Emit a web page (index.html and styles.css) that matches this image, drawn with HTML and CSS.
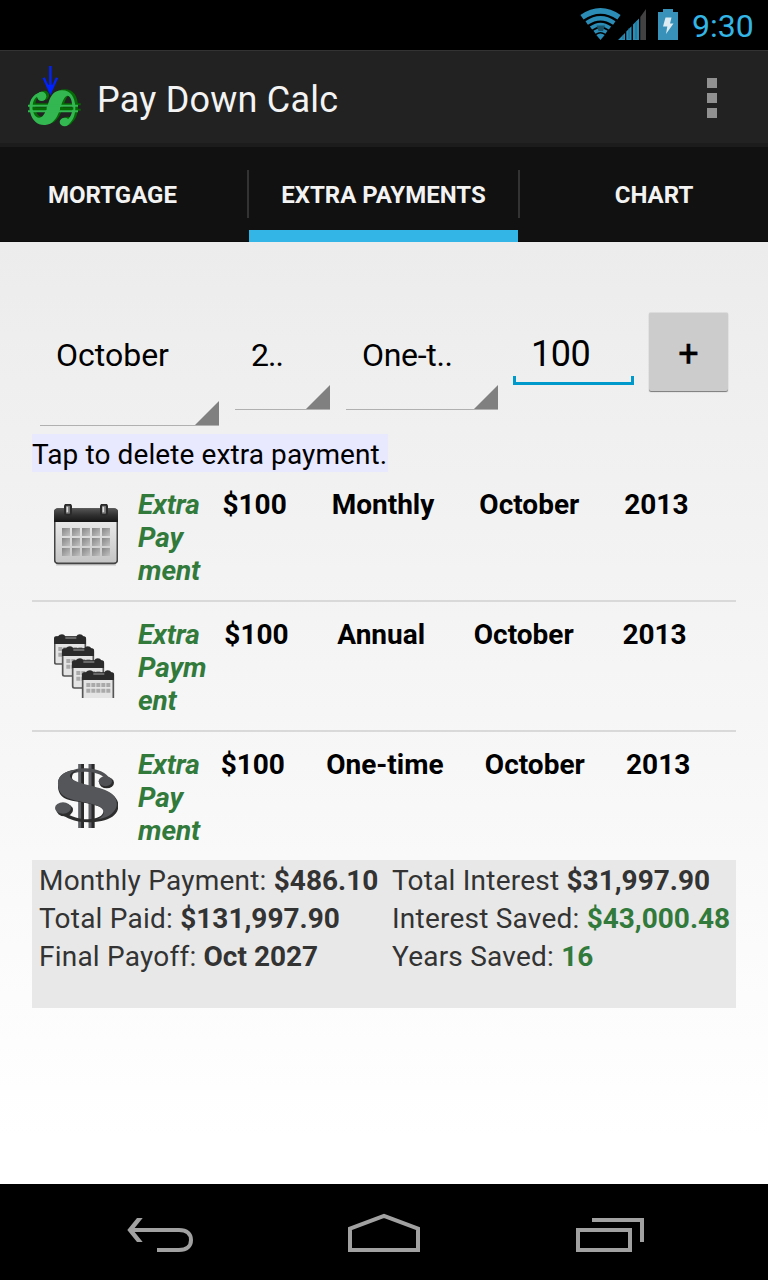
FILE: index.html
```html
<!DOCTYPE html>
<html lang="en">
<head>
<meta charset="utf-8">
<title>Pay Down Calc</title>
<link rel="stylesheet" href="styles.css">
</head>
<body>
<div class="screen">
  <header class="status">
    <svg class="status-icons" width="104" height="34" viewBox="0 0 104 34">
      <g fill="none" stroke="#2b8db6">
        <path d="M2 10.300 Q20.500 -2.500 39 10.300" stroke-width="5.600"/>
        <path d="M6.700 16 Q20.500 6.500 34.300 16" stroke-width="4.200"/>
        <path d="M11 21 Q20.500 14.200 30 21" stroke-width="3.800"/>
        <path d="M14.500 25.300 Q20.500 21 26.500 25.300" stroke-width="3.600"/>
      </g>
      <path d="M16.300 28 Q20.500 25 24.700 28 L20.500 33Z" fill="#2b8db6"/>
      <path d="M16.500 18.500 H25 L23 24 H18.500Z" fill="#1c5268"/>
      <path d="M38 33 L45 26 V33Z M46.300 24.600 L51.500 19.300 V33 H46.300Z M53 17.500 L59 11.500 V33 H53Z" fill="#2b8db6"/>
      <path d="M60.300 10 L66 2 V33 H60.300Z" fill="#424242"/>
      <path d="M43 28v4M49 21v11M56 15v17" stroke="#17617f" stroke-width=".8"/>
      <path d="M78 5 H83 V2 H93 V5 H98 V33 H78Z" fill="#3891b9"/>
      <path d="M85.500 10.500 H91.500 L90 16.500 H93.500 L86 27 L87.300 19.500 H83Z" fill="#dcebf2"/>
    </svg>
    <span class="clock">9:30</span>
  </header>

  <div class="action-bar">
    <svg class="logo" width="70" height="75" viewBox="0 0 210 225">
      <defs>
        <g id="dollar">
          <path d="M62 97 C36 102 22 130 31 159 C37 183 54 197 76 195 C97 193 109 177 117 156 C124 137 128 113 141 107 C150 106 156 119 157 140 C158 159 151 174 138 182 L146 192 C160 182 166 164 166 143 C166 111 152 91 126 91 C102 91 92 107 85 129 C78 152 71 174 57 173 C45 172 38 158 38 140 C38 122 46 109 62 105Z"/>
          <ellipse cx="65" cy="109" rx="14" ry="14"/>
          <ellipse cx="134" cy="186" rx="15" ry="13"/>
        </g>
      </defs>
      <use href="#dollar" x="8" y="-3" fill="#056b05"/>
      <path d="M32 133H182M32 149H182" stroke="#056b05" stroke-width="6"/>
      <use href="#dollar" fill="#33b751"/>
      <path d="M38 145.500H160" stroke="#056b05" stroke-width="8"/>
      <path d="M80 145.500H120" stroke="#33b751" stroke-width="9"/>
      <path d="M24 137.500H174M24 153.500H174" stroke="#33b751" stroke-width="6"/>
      <path d="M91 18V91M71 53L91 97L111 53" fill="none" stroke="#0022ff" stroke-width="7"/>
      <path d="M83 74L91 104L99 74Z" fill="#0022ff"/>
    </svg>
    <h1 class="title">Pay Down Calc</h1>
    <div class="overflow"><i></i><i></i><i></i></div>
  </div>

  <nav class="tabs">
    <div class="tab tab-first"><span>MORTGAGE</span></div>
    <div class="tab tab-active"><span>EXTRA PAYMENTS</span></div>
    <div class="tab tab-last"><span>CHART</span></div>
  </nav>

  <main class="content">
    <div class="form">
      <div class="spinner month"><span>October</span></div>
      <div class="spinner year"><span>2..</span></div>
      <div class="spinner kind"><span>One-t..</span></div>
      <div class="field"><span>100</span></div>
      <div class="add">+</div>
    </div>
    <div class="hint"><span>Tap to delete extra payment.</span></div>

    <div class="row">
      <svg class="icon" width="64" height="64" viewBox="42 42 192 192">
        <defs>
          <linearGradient id="paper" x2="0" y2="1"><stop offset="0" stop-color="#f4f4f4"/><stop offset="1" stop-color="#c4c4c4"/></linearGradient>
          <linearGradient id="top" x2="0" y2="1"><stop offset="0" stop-color="#555"/><stop offset=".5" stop-color="#303030"/><stop offset="1" stop-color="#161616"/></linearGradient>
          <linearGradient id="day" x2="1" y2="1"><stop offset="0" stop-color="#858585"/><stop offset="1" stop-color="#c2c2c2"/></linearGradient>
        </defs>
        <path d="M48 224H228" stroke="#bbb" stroke-width="6" opacity=".6"/>
        <rect x="44" y="57" width="188" height="163" rx="10" fill="url(#paper)" stroke="#444" stroke-width="5"/>
        <path d="M42 96V66Q42 55 53 55H223Q234 55 234 66V96Z" fill="url(#top)"/>
        <g fill="url(#day)">
          <path d="M66 114h24v24h-24z"/><path d="M96 114h24v24h-24z"/><path d="M126 114h24v24h-24z"/><path d="M156 114h24v24h-24z"/><path d="M186 114h24v24h-24z"/>
          <path d="M66 144h24v24h-24z"/><path d="M96 144h24v24h-24z"/><path d="M126 144h24v24h-24z"/><path d="M156 144h24v24h-24z"/><path d="M186 144h24v24h-24z"/>
          <path d="M66 174h24v24h-24z"/><path d="M96 174h24v24h-24z"/><path d="M126 174h24v24h-24z"/><path d="M156 174h24v24h-24z"/><path d="M186 174h24v24h-24z"/>
        </g>
        <g fill="#777" stroke="#2a2a2a" stroke-width="6"><rect x="75" y="44" width="18" height="30" rx="5"/><rect x="183" y="44" width="18" height="30" rx="5"/></g>
        <path d="M82 50v17M190 50v17" stroke="#ddd" stroke-width="5"/>
      </svg>
      <div class="label">Extra<br>Pay<br>ment</div>
      <div class="cells"><span>$100</span><span>Monthly</span><span>October</span><span>2013</span></div>
    </div>

    <div class="row">
      <svg class="icon soft" width="64" height="64" viewBox="42 42 192 192">
        <defs>
          <g id="mini">
            <rect x="2" y="8" width="92" height="80" rx="5" fill="#e4e4e4" stroke="#555" stroke-width="5"/>
            <path d="M0 28V12Q0 5 7 5H12Q16 -1 24 -1Q31 -1 34 5H67Q70 -1 77 -1Q85 -1 88 5Q96 5 96 12V28Z" fill="#2a2a2a"/>
            <path d="M34 10H67" stroke="#888" stroke-width="4"/>
            <path d="M13 43H85M13 60H85" stroke="#aaa" stroke-width="12" stroke-dasharray="12 3"/>
          </g>
        </defs>
        <use href="#mini" x="42" y="44"/><use href="#mini" x="66" y="80"/><use href="#mini" x="96" y="116"/><use href="#mini" x="126" y="152"/>
      </svg>
      <div class="label">Extra<br>Paym<br>ent</div>
      <div class="cells"><span>$100</span><span>Annual</span><span>October</span><span>2013</span></div>
    </div>

    <div class="row row-last">
      <svg class="icon soft" width="64" height="64" viewBox="42 42 192 192">
        <path d="M125 42V234M157 42V234" stroke="#292929" stroke-width="14"/>
        <path d="M119 42V234M150 42V234" stroke="#606164" stroke-width="9"/>
        <path d="M70 84C85 67 108 59 137 60C172 61 196 71 209 94" fill="none" stroke="#505154" stroke-width="10"/>
        <path d="M54 104C52 75 79 60 114 60C101 66 93 76 97 87C108 110 190 111 219 135C243 156 239 185 217 200C187 220 122 221 92 208C71 199 58 192 47 178L60 174C80 195 109 208 144 208C174 207 193 196 190 181C182 158 107 161 74 145C60 137 53 123 54 104Z" fill="#2d2d2e"/>
        <path d="M54 98C54 76 79 59 111 60C92 67 85 76 93 84C110 104 188 108 216 132C231 146 235 165 225 179C214 196 197 204 174 207C192 198 195 188 188 178C174 157 101 158 72 138C59 130 53 114 54 98Z" fill="#555659"/>
        <ellipse cx="200" cy="98" rx="22" ry="17" fill="#2b2b2c"/>
        <ellipse cx="196" cy="94" rx="20" ry="15" fill="#505154"/>
        <ellipse cx="74" cy="180" rx="25" ry="19" fill="#2e2e2f"/>
        <ellipse cx="69" cy="174" rx="24" ry="17" fill="#555659"/>
      </svg>
      <div class="label">Extra<br>Pay<br>ment</div>
      <div class="cells"><span>$100</span><span>One-time</span><span>October</span><span>2013</span></div>
    </div>

    <div class="summary">
      <div class="col-a">
        <div>Monthly Payment: <b>$486.10</b></div>
        <div>Total Paid: <b>$131,997.90</b></div>
        <div>Final Payoff: <b>Oct 2027</b></div>
      </div>
      <div class="col-b">
        <div>Total Interest <b>$31,997.90</b></div>
        <div>Interest Saved: <b class="good">$43,000.48</b></div>
        <div>Years Saved: <b class="good">16</b></div>
      </div>
    </div>
  </main>

  <footer class="navbar">
    <svg width="768" height="96" viewBox="0 0 768 96" fill="none" stroke="#a1a1a1" stroke-width="4">
      <path d="M132 46H179C187 46 191 50 191 56C191 62 187 66 179 66H157"/>
      <path d="M137 34H142.700L133 46L142.700 58H137L127.300 46Z" fill="#a1a1a1" stroke="none"/>
      <path d="M350 66V44.700L384 32L418 44.700V66Z"/>
      <path d="M578 46H630V66H578ZM592 36H642V58"/>
    </svg>
  </footer>
</div>
</body>
</html>
```

FILE: styles.css
```css
* { box-sizing: border-box; }
body { margin: 0; font-family: Roboto, sans-serif; color: #000; }
.screen { width: 768px; height: 1280px; display: flex; flex-direction: column; overflow: hidden; background: #000; }

.status { height: 50px; display: flex; align-items: flex-start; padding: 7px 14px 0 0; justify-content: flex-end; }
.clock { width: 62px; margin-left: 8px; font-size: 32px; line-height: 38px; color: #33b5e5; white-space: nowrap; }

.action-bar { height: 97px; display: flex; background: #222; border-top: 1px solid #333; border-bottom: 4px solid #1c1c1c; padding-left: 20px; }
.logo { margin-top: 9px; }
.title { margin: 28px 0 0 7px; font-size: 36px; line-height: 42px; font-weight: 400; letter-spacing: .22px; color: #f3f3f3; }
.overflow { margin: 27px 51px 0 auto; display: flex; flex-direction: column; gap: 5px; }
.overflow i { width: 10px; height: 10px; background: #919191; }

.tabs { height: 95px; display: flex; background: #111; border-bottom: 1px solid #0c0c0c; color: #f3f3f3; font-size: 24px; font-weight: 700; line-height: 28px; }
.tab { height: 95px; display: flex; justify-content: center; padding-top: 34px; }
.tab-first { width: 249px; padding-right: 24px; background: linear-gradient(#333, #333) 247px 23px / 2px 48px no-repeat; }
.tab-active { width: 269px; border-bottom: 12px solid #33b5e5; }
.tab-last { width: 250px; padding-left: 22px; background: linear-gradient(#333, #333) 0 23px / 2px 48px no-repeat; }

.content { height: 942px; padding: 0 32px; background: linear-gradient(#ececec, #fff 95%); }
.form { height: 192px; display: flex; align-items: flex-start; padding: 70px 8px 0; }
.spinner { font-size: 32px; line-height: 38px; padding: 24px 0 0 16px; white-space: nowrap; border-bottom: 1px solid #b0b0b0;
  background: linear-gradient(135deg, transparent 48.5%, #808080 51.5%) right bottom / 24px 24px no-repeat; }
.month { width: 179px; height: 114px; }
.year { width: 95px; height: 98px; margin-left: 16px; letter-spacing: -.9px; }
.kind { width: 152px; height: 98px; margin-left: 16px; letter-spacing: -.3px; }
.field { width: 121px; height: 73px; margin-left: 15px; padding: 21px 0 0 18px; font-size: 36px; line-height: 42px; letter-spacing: -.5px;
  background: linear-gradient(#0099cc, #0099cc) left bottom / 3px 9px no-repeat, linear-gradient(#0099cc, #0099cc) right bottom / 3px 9px no-repeat, linear-gradient(#0099cc, #0099cc) left bottom / 100% 3px no-repeat; }
.add { width: 79px; height: 79px; margin-left: 15px; background: #ccc; border-radius: 2px; box-shadow: 0 1px 1px #777; border-top: 1px solid #ddd; font-size: 36px; line-height: 82px; text-align: center; -webkit-text-stroke: .4px #000; }

.hint { height: 38px; font-size: 28px; line-height: 38px; letter-spacing: .1px; display: flex; }
.hint span { background: #e8e8ff; padding-top: 2px; height: 38px; width: 356px; white-space: nowrap; }

.row { height: 130px; display: flex; border-bottom: 2px solid #d9d9d9; padding-left: 22px; font-size: 28px; line-height: 33px; font-weight: 700; }
.row-last { height: 128px; border-bottom: 0; }
.icon { margin-top: 32px; flex: none; }
.soft { filter: blur(.5px); }
.label { width: 82px; padding: 16px 0 0 20px; font-style: italic; color: #317a3b; letter-spacing: -.15px; white-space: nowrap; flex: none; }
.cells { width: 511px; padding-top: 16px; display: flex; justify-content: space-around; }

.summary { height: 148px; background: #e8e8e8; color: #333; font-size: 28px; line-height: 38px; letter-spacing: .22px; display: flex; padding: 2px 0 0 7px; white-space: nowrap; }
.summary b { letter-spacing: 0; }
.col-a { width: 353px; }
.good { color: #317a3b; }

.navbar { height: 96px; background: #000; }
.navbar svg { display: block; }
```
